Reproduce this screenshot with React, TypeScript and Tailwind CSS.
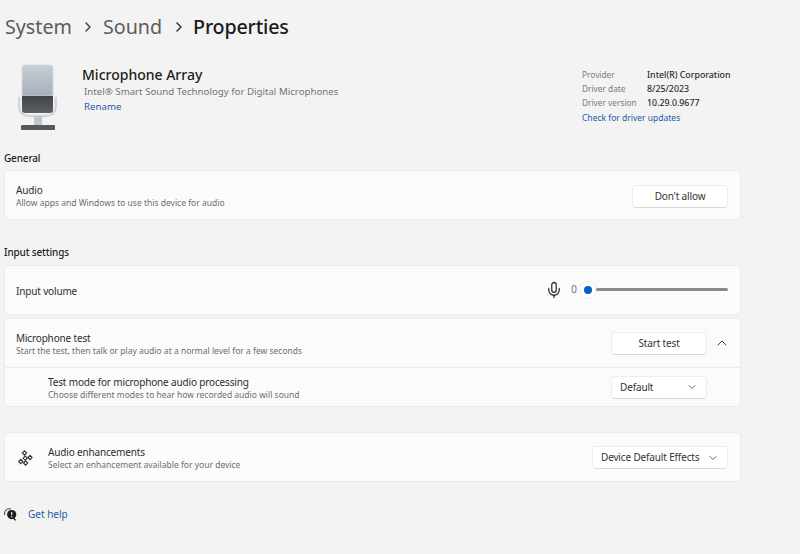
import React from 'react'
import { ChevronRight, ChevronDown, ChevronUp, Mic } from 'lucide-react'

const font = { fontFamily: '"Noto Sans", sans-serif' }

function DeviceIcon() {
  return (
    <svg width="40" height="67" viewBox="0 0 40 67" className="shrink-0">
      <defs>
        <linearGradient id="top" x1="0" y1="0" x2="0" y2="1">
          <stop offset="0" stopColor="#c6ced6" />
          <stop offset="1" stopColor="#a6b0b9" />
        </linearGradient>
        <linearGradient id="low" x1="0" y1="0" x2="0" y2="1">
          <stop offset="0" stopColor="#434549" />
          <stop offset="1" stopColor="#5c5f63" />
        </linearGradient>
      </defs>
      <path d="M1.2 33v10a9 9 0 0 0 9 9h18.6a9 9 0 0 0 9-9V33" fill="none" stroke="#cfd7de" strokeWidth="2.4" />
      <rect x="16" y="52" width="8" height="9" fill="#bcc6ce" />
      <path d="M4 32V4a3 3 0 0 1 3-3h25a3 3 0 0 1 3 3v28z" fill="url(#top)" stroke="#d3dae0" strokeWidth="0.8" />
      <path d="M4 32h31v14a3 3 0 0 1-3 3H7a3 3 0 0 1-3-3z" fill="url(#low)" />
      <rect x="3" y="61" width="34" height="5" rx="1" fill="#55585c" />
    </svg>
  )
}

function EnhanceIcon() {
  const centers = [[6.5, 3], [12, 7.5], [7.2, 8.2], [2.8, 11.5], [7.6, 13]]
  return (
    <svg width="16" height="16" viewBox="0 0 16 16" fill="none" stroke="#333" strokeWidth="1.1" className="shrink-0">
      {centers.map(([x, y]) => (
        <path key={`${x}-${y}`} d={`M${x} ${y - 2.1}l2.1 2.1l-2.1 2.1l-2.1-2.1z`} />
      ))}
    </svg>
  )
}

function HelpIcon() {
  return (
    <svg width="13" height="13" viewBox="0 0 13 13" className="shrink-0">
      <path d="M.7 7V5A4.2 4.2 0 0 1 4.9.8h2" fill="none" stroke="#333" strokeWidth="1" />
      <circle cx="7.7" cy="6.6" r="4.6" fill="#1c1c1c" />
      <path d="M9.5 10 11.6 12.4" stroke="#1c1c1c" strokeWidth="1.4" />
      <rect x="7.1" y="4" width="1.2" height="3.2" fill="#e8e8e8" />
      <rect x="7.1" y="8" width="1.2" height="1.2" fill="#e8e8e8" />
    </svg>
  )
}

function WinButton({ children, className }: { children: React.ReactNode; className: string }) {
  return (
    <div className={`flex items-center bg-white rounded border border-[#ededed] border-b-[#d8d8d8] text-[10px] tracking-[-0.15px] text-[#333] ${className}`}>
      {children}
    </div>
  )
}

function Labels({ title, sub, className = '' }: { title: string; sub: string; className?: string }) {
  return (
    <div className={`flex flex-col ${className}`}>
      <span className="text-[10px] leading-[13px] tracking-[-0.16px] text-[#2e2e2e]">{title}</span>
      <span className="text-[8.5px] leading-[12px] text-[#6e6e6e]">{sub}</span>
    </div>
  )
}

function Card({ className, children }: { className: string; children: React.ReactNode }) {
  return <div className={`bg-[#fbfbfb] border border-[#ebebeb] rounded ${className}`}>{children}</div>
}

export default function App() {
  return (
    <div className="w-[800px] h-[554px] overflow-hidden bg-[#f3f3f3] pl-1" style={font}>
      <div className="flex items-center h-[28px] mt-[13px] text-[19.7px] leading-[28px] text-[#5c5c5c]">
        <span className="ml-px">System</span>
        <ChevronRight size={16} strokeWidth={2.2} className="ml-[8px] mr-[7px] text-[#444]" />
        <span>Sound</span>
        <ChevronRight size={16} strokeWidth={2.2} className="ml-[9px] mr-[6px] text-[#333]" />
        <span className="font-medium text-[#1b1b1b] tracking-[-0.2px]">Properties</span>
      </div>

      <div className="flex w-[737px] h-[90px] mt-[22px]">
        <div className="ml-[14px] mr-[24px] mt-px">
          <DeviceIcon />
        </div>
        <div className="flex flex-col w-[500px] mt-[2px]">
          <span className="text-[14px] leading-[20px] font-medium text-[#1c1c1c]">Microphone Array</span>
          <span className="text-[9.7px] leading-[14px] text-[#737373] ml-[2px]">Intel® Smart Sound Technology for Digital Microphones</span>
          <span className="text-[9.7px] leading-[14px] mt-px text-[#1f5aa8] ml-[2px]">Rename</span>
        </div>
        <div className="grid grid-cols-[65px_auto] auto-rows-[14px] text-[8.8px] leading-[14px] mt-[5px] h-fit">
          <span className="text-[8.3px] text-[#7b7b7b]">Provider</span>
          <span className="font-medium text-[#2b2b2b]">Intel(R) Corporation</span>
          <span className="text-[8.3px] text-[#7b7b7b]">Driver date</span>
          <span className="font-medium text-[#2b2b2b]">8/25/2023</span>
          <span className="text-[8.3px] text-[#7b7b7b]">Driver version</span>
          <span className="font-medium text-[#2b2b2b]">10.29.0.9677</span>
          <span className="col-span-2 text-[8.5px] text-[#1f5aa8] mt-px">Check for driver updates</span>
        </div>
      </div>

      <div className="text-[10px] leading-[14px] tracking-[-0.15px] font-medium text-[#1f1f1f] mt-[-2px]">General</div>
      <Card className="w-[737px] h-[50px] mt-[5px] pt-[2px] flex items-center justify-between pl-[11px] pr-3">
        <Labels title="Audio" sub="Allow apps and Windows to use this device for audio" className="mt-px" />
        <WinButton className="w-[96px] h-[23px] justify-center">Don't allow</WinButton>
      </Card>

      <div className="text-[10px] leading-[14px] tracking-[-0.15px] font-medium text-[#1f1f1f] mt-[25px]">Input settings</div>
      <Card className="w-[737px] h-[50px] mt-[6px] flex items-center justify-between pl-[11px] pr-3">
        <span className="text-[10px] tracking-[-0.16px] text-[#2e2e2e] mt-[2px]">Input volume</span>
        <div className="flex items-center mb-px">
          <Mic size={18} strokeWidth={1.7} className="text-[#333] mr-[8px]" />
          <span className="text-[10.5px] text-[#777] w-[9px] mt-px">0</span>
          <div className="flex items-center justify-center w-[16px] h-[16px] rounded-full bg-white shadow-[0_0_1px_#c4c4c4]">
            <div className="w-[8px] h-[8px] rounded-full bg-[#0063c4]" />
          </div>
          <div className="w-[132px] h-[3px] rounded-full bg-[#8a8a8a]" />
        </div>
      </Card>

      <Card className="w-[737px] h-[89px] mt-[3px] flex flex-col">
        <div className="flex items-center justify-between h-[49px] pl-[11px] pr-3 border-b border-[#ebebeb]">
          <Labels title="Microphone test" sub="Start the test, then talk or play audio at a normal level for a few seconds" className="mt-[2px]" />
          <div className="flex items-center">
            <WinButton className="w-[96px] h-[23px] justify-center">Start test</WinButton>
            <ChevronUp size={16} strokeWidth={1.5} className="text-[#444] ml-[7px] mr-[-2px]" />
          </div>
        </div>
        <div className="flex items-center justify-between flex-1 pl-[43px] pr-[33px]">
          <Labels title="Test mode for microphone audio processing" sub="Choose different modes to hear how recorded audio will sound" className="mt-[2px]" />
          <WinButton className="w-[96px] h-[23px] justify-between pl-[8px] pr-[8px]">
            Default
            <ChevronDown size={12} strokeWidth={2} className="text-[#666]" />
          </WinButton>
        </div>
      </Card>

      <Card className="w-[737px] h-[50px] mt-[25px] pt-px flex items-center justify-between pl-[13px] pr-3">
        <div className="flex items-center gap-[14px]">
          <EnhanceIcon />
          <Labels title="Audio enhancements" sub="Select an enhancement available for your device" className="mt-[2px]" />
        </div>
        <WinButton className="w-[136px] h-[23px] justify-between pl-[8px] pr-[8px]">
          Device Default Effects
          <ChevronDown size={12} strokeWidth={2} className="text-[#666]" />
        </WinButton>
      </Card>

      <div className="flex items-center mt-[24px] h-[16px]">
        <HelpIcon />
        <span className="ml-[11px] text-[10px] text-[#1f5aa8]">Get help</span>
      </div>
    </div>
  )
}
